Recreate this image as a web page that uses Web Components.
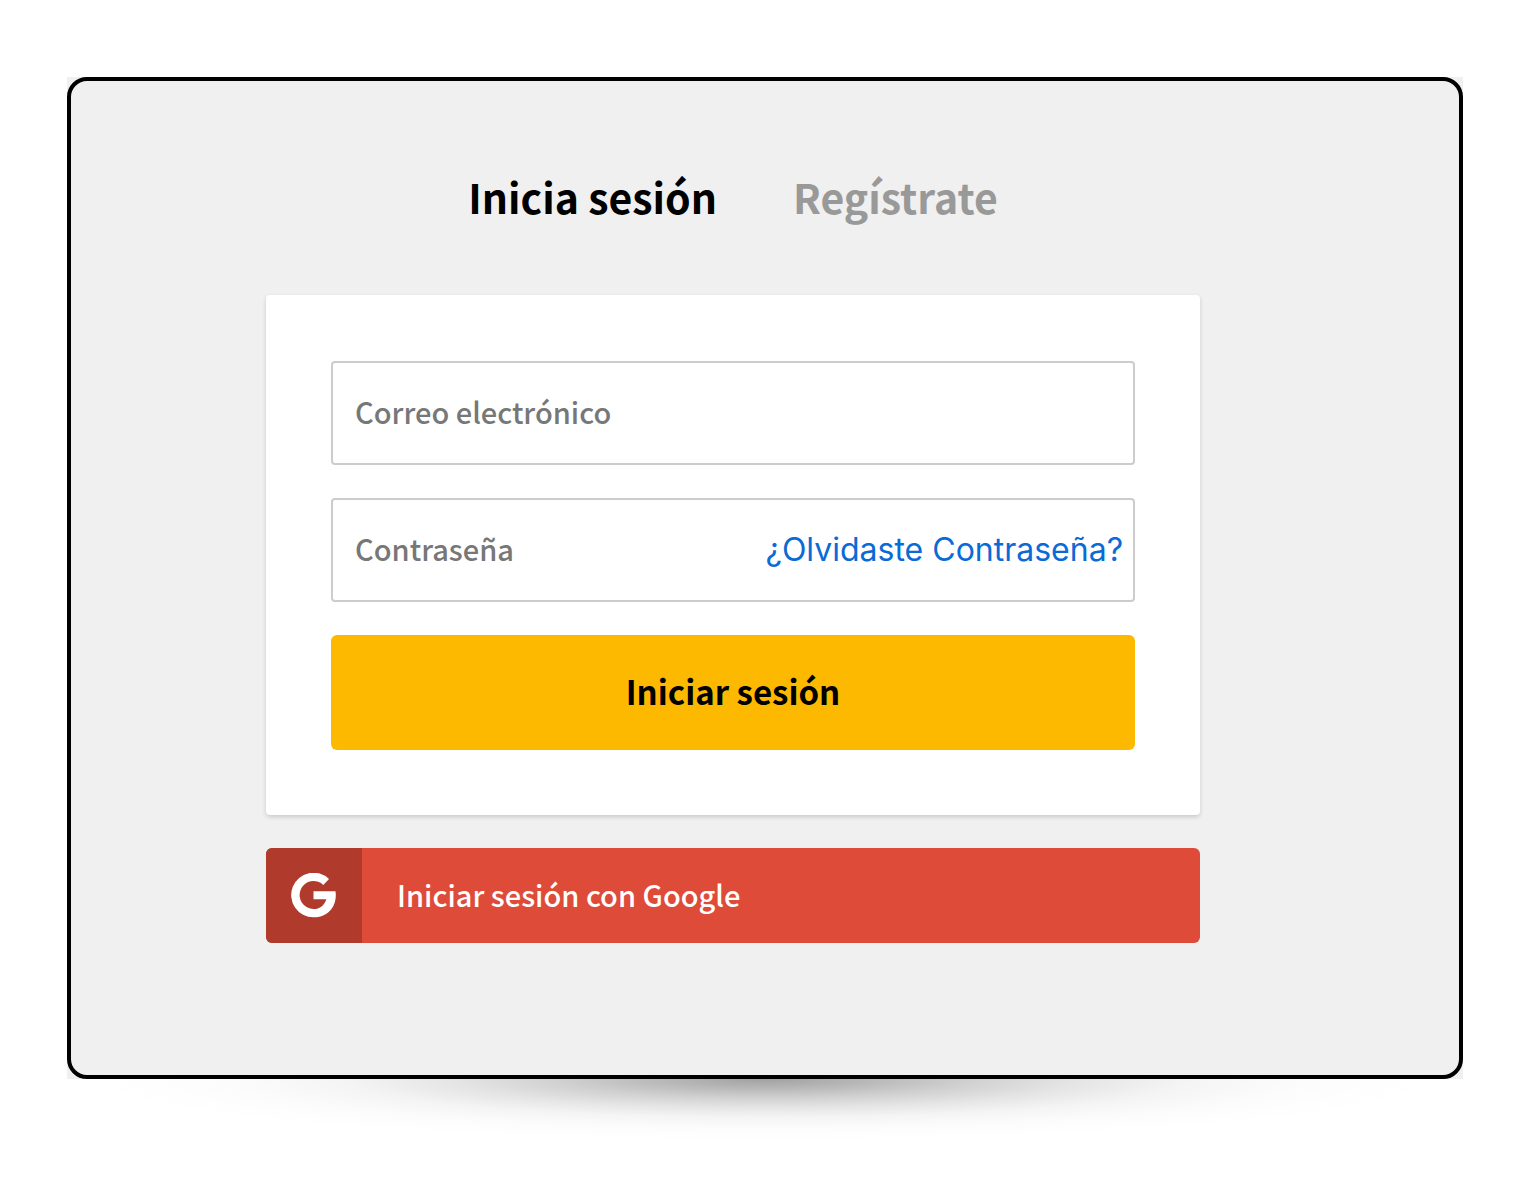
<!DOCTYPE html>
<html lang="es">
<head>
<meta charset="utf-8">
<meta name="viewport" content="width=device-width, initial-scale=1">
<title>Inicia sesión</title>
<style>
  body { margin: 0; background: #fff; font-family: "Noto Sans CJK JP", "Noto Sans", sans-serif; }
</style>
</head>
<body>
<app-window>
  <auth-tabs></auth-tabs>
  <login-card>
    <text-field name="email" type="email" label="Correo electrónico"></text-field>
    <text-field name="password" type="password" label="Contraseña">
      <forgot-link slot="end"></forgot-link>
    </text-field>
    <primary-button>Iniciar sesión</primary-button>
  </login-card>
  <google-button>Iniciar sesión con Google</google-button>
</app-window>

<script>
  const define = (name, html, setup) => {
    const template = document.createElement('template');
    template.innerHTML = '<style>*{box-sizing:border-box}</style>' + html;
    customElements.define(name, class extends HTMLElement {
      connectedCallback() {
        if (this.shadowRoot) return;
        this.attachShadow({ mode: 'open' }).append(template.content.cloneNode(true));
        if (setup) setup(this, this.shadowRoot);
      }
    });
  };

  define('app-window', `
    <style>
      :host { display: block; padding: 77px 67px 0; }
      .back { background: #f0f0f0; }
      main {
        display: flex; flex-direction: column; align-items: center;
        border: 4px solid #000; border-radius: 20px;
        padding: 84px 64px 132px 0;
      }
      .content { display: flex; flex-direction: column; width: 100%; max-width: 934px; }
      .shadow {
        height: 64px;
        background: radial-gradient(ellipse 50% 100% at 50% 0,
          rgba(0,0,0,.37) 0%, rgba(0,0,0,.28) 15%, rgba(0,0,0,.18) 30%, rgba(0,0,0,.10) 45%,
          rgba(0,0,0,.045) 60%, rgba(0,0,0,.016) 75%, rgba(0,0,0,.004) 88%, transparent 100%);
      }
    </style>
    <div class="back"><main><div class="content"><slot></slot></div></main></div>
    <div class="shadow"></div>`);

  define('auth-tabs', `
    <style>
      :host { display: block; margin-bottom: 68px; }
      nav { display: flex; justify-content: center; gap: 76px; }
      a { font-size: 41px; line-height: 62px; font-weight: 700; color: #999; text-decoration: none; white-space: nowrap; }
      a[aria-current] { color: #000; }
    </style>
    <nav><a href="#login" aria-current="page">Inicia sesión</a><a href="#signup">Regístrate</a></nav>`);

  define('login-card', `
    <style>
      :host { display: block; margin-bottom: 33px; }
      form {
        display: flex; flex-direction: column; gap: 33px; padding: 66px 65px 65px;
        background: #fff; border-radius: 4px; box-shadow: 0 2px 4px rgba(0,0,0,.16);
      }
    </style>
    <form><slot></slot></form>`);

  define('text-field', `
    <style>
      :host { display: block; }
      .box { display: flex; align-items: center; height: 104px; border: 2px solid #ccc; border-radius: 4px; background: #fff; padding: 0 10px 0 22px; }
      .box:focus-within { border-color: #0a66d8; }
      input { flex: 1; min-width: 0; height: 100%; padding: 0 0 4px; border: 0; outline: 0; background: none; font-family: inherit; font-size: 29px; font-weight: 500; color: #222; }
      input::placeholder { color: #777; opacity: 1; }
    </style>
    <div class="box"><input><slot name="end"></slot></div>`,
    (host, root) => {
      const input = root.querySelector('input');
      input.type = host.getAttribute('type');
      input.name = host.getAttribute('name');
      input.placeholder = host.getAttribute('label');
      input.setAttribute('aria-label', host.getAttribute('label'));
    });

  define('forgot-link', `
    <style>
      :host { display: block; }
      a { font: 400 32px/40px Inter, sans-serif; color: #0a6ad6; text-decoration: none; white-space: nowrap; }
    </style>
    <a href="#forgot">¿Olvidaste Contraseña?</a>`);

  define('primary-button', `
    <style>
      :host { display: block; }
      button { display: block; width: 100%; height: 115px; padding: 0 0 4px; border: 0; border-radius: 6px; background: #fdb800; color: #000; font-family: inherit; font-size: 33px; font-weight: 700; cursor: pointer; }
    </style>
    <button type="submit"><slot></slot></button>`);

  define('google-button', `
    <style>
      :host { display: block; }
      button { display: flex; align-items: stretch; width: 100%; height: 95px; padding: 0; border: 0; border-radius: 6px; overflow: hidden; background: #de4b39; color: #fff; font-family: inherit; font-size: 29px; font-weight: 500; cursor: pointer; }
      .icon { display: flex; align-items: center; justify-content: center; width: 96px; background: #b03b2d; }
      .text { display: flex; align-items: center; padding: 0 35px 4px; }
    </style>
    <button type="button">
      <span class="icon"><svg width="46" height="46" viewBox="0 1 46 46" aria-hidden="true"><path fill="#fff" d="M38 7A22.300 22.300 0 1 0 22.500 45.300C36 45.300 44.800 36 44.800 23.200C44.800 21.800 44.700 20.500 44.500 19.200H22.500V27.200H35.300C33.500 33.300 29 37 22.500 37A14 14 0 1 1 32.300 12.900Z"/></svg></span>
      <span class="text"><slot></slot></span>
    </button>`);
</script>
</body>
</html>
